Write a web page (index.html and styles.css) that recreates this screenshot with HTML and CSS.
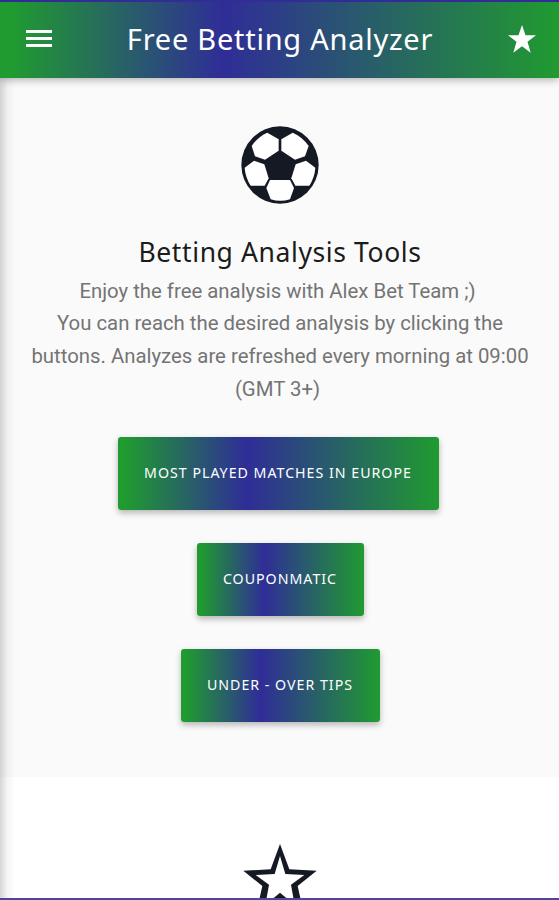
FILE: index.html
```html
<!DOCTYPE html>
<html lang="en">
<head>
    <meta charset="UTF-8">
    <title>Free Betting Analyzer</title>
    <link rel="stylesheet" href="styles.css">
</head>
<body>
<div class="app">
    <header class="navbar">
        <svg class="menu" viewBox="0 0 26 18">
            <path d="M0 0h26v3H0zM0 7h26v3H0zM0 14h26v3H0z"/>
        </svg>
        <h1>Free Betting Analyzer</h1>
        <svg class="fav" viewBox="0 0 28 28">
            <path d="M14 0l3.5 10.3H28l-8.5 6.5 3.2 10.9L14 21.3l-8.7 6.4 3.2-10.9L0 10.3h10.5z"/>
        </svg>
    </header>
    <main class="content">
        <section class="tools">
            <svg class="ball" viewBox="62 45 240 240">
                <circle cx="182" cy="165" r="116"/>
                <g class="patch">
                    <path d="M144 68l34 20v34l-41 27-30-10-10-31q19-28 47-40z"/>
                    <path d="M220 68l-34 20v34l41 27 30-10 11-31q-19-28-48-40z"/>
                    <path d="M104 152l31 11 13 42-12 22H94q-16-25-18-54z"/>
                    <path d="M260 152l-31 11-13 42 12 22h42q16-25 18-54z"/>
                    <path d="M152 210h60l12 24-12 34q-29 9-58 0l-13-34z"/>
                </g>
            </svg>
            <h2>Betting Analysis Tools</h2>
            <p>Enjoy the free analysis with Alex Bet Team ;)&nbsp;<br>
                You can reach the desired analysis by clicking the buttons. Analyzes are refreshed every morning at 09:00 (GMT 3+)&nbsp;</p>
            <a class="btn most">MOST PLAYED MATCHES IN EUROPE</a>
            <a class="btn coupon">COUPONMATIC</a>
            <a class="btn under">UNDER - OVER TIPS</a>
        </section>
        <section class="next">
            <svg class="star" viewBox="62 36 240 240">
                <path fill-rule="evenodd" d="M182 42L210 118L292 122L235 168L256 262L182 212L108 262L129 168L72 122L154 118zM182 78L166 132L109 135L149 164L138 225L182 188L226 225L215 164L255 135L198 132z"/>
            </svg>
        </section>
    </main>
</div>
</body>
</html>
```
FILE: styles.css
```css
* {
    box-sizing: border-box;
    margin: 0;
    padding: 0;
}

body {
    background: #fff;
    font-family: Roboto, "Liberation Sans", sans-serif;
}

.app {
    display: flex;
    flex-direction: column;
    height: 900px;
    overflow: hidden;
    border-top: 2px solid #312c96;
    border-bottom: 2px solid #51459b;
}

.navbar, .btn {
    color: #fff;
    background: linear-gradient(90deg, #209b30 0%, #209b30 2%, #2f2d97 40%, #209b30 100%);
    font-family: "Noto Sans", sans-serif;
}

.navbar {
    display: flex;
    flex: none;
    align-items: center;
    justify-content: space-between;
    height: 76px;
    padding: 0 23px 2px 26px;
    position: relative;
    z-index: 2;
    box-shadow: 0 2px 8px rgba(0, 0, 0, .3);
}

.navbar svg {
    fill: #fff;
}

.menu {
    width: 26px;
    height: 18px;
}

.fav {
    width: 28px;
    height: 28px;
}

.navbar h1 {
    font-size: 29px;
    font-weight: 400;
    letter-spacing: .75px;
    line-height: 40px;
    white-space: nowrap;
}

.content {
    flex: 1;
    min-height: 0;
    overflow: hidden;
    position: relative;
}

/* side menu shadow */
.content::before {
    content: "";
    position: absolute;
    left: 0;
    top: 0;
    bottom: 0;
    width: 15px;
    background: linear-gradient(90deg, rgba(0, 0, 0, .16), rgba(0, 0, 0, .04) 50%, rgba(0, 0, 0, 0));
}

.tools {
    display: flex;
    flex-direction: column;
    align-items: center;
    height: 699px;
    padding: 47px 27px 0 28px;
    background: #fafafa;
    text-align: center;
}

.ball {
    flex: none;
    width: 80px;
    height: 80px;
    fill: #151923;
}

.patch {
    fill: #fff;
}

.tools h2 {
    margin-top: 27px;
    color: #1b1b1b;
    font-family: "Noto Sans", sans-serif;
    font-size: 26.5px;
    font-weight: 400;
    letter-spacing: .6px;
    line-height: 40px;
    white-space: nowrap;
}

.tools p {
    margin: 2.5px 0 32px;
    color: #747474;
    font-size: 20.35px;
    line-height: 32.7px;
}

.btn {
    flex: none;
    height: 73px;
    margin-bottom: 33px;
    border-radius: 3px;
    box-shadow: 0 3px 6px rgba(0, 0, 0, .28);
    font-size: 14.2px;
    letter-spacing: 1px;
    line-height: 71px;
    white-space: nowrap;
}

.most {
    width: 321px;
    margin-right: 4px;
}

.coupon {
    width: 167px;
}

.under {
    width: 199px;
}

.next {
    padding: 65px 0 0 1px;
    text-align: center;
}

.star {
    width: 80px;
    height: 80px;
    fill: #151923;
}
```
